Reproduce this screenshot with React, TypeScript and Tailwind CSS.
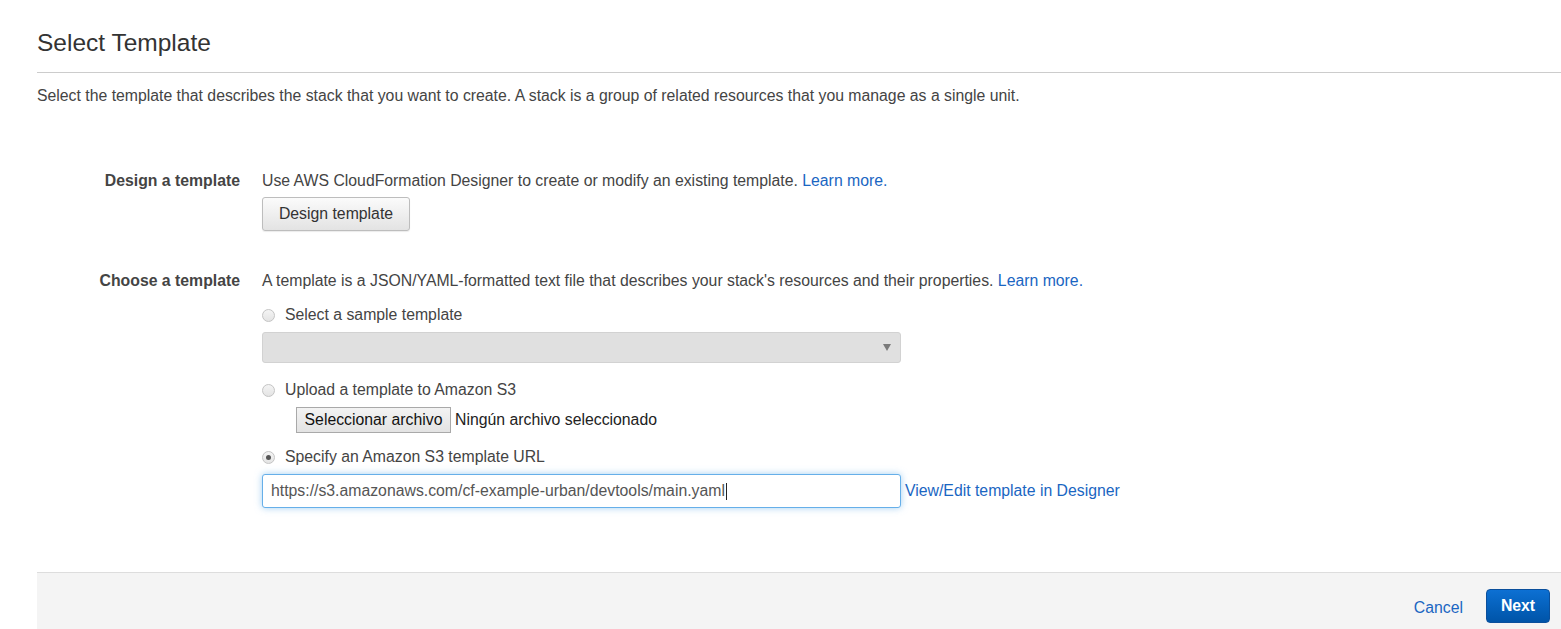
import React from "react";

const font = { fontFamily: '"Liberation Sans", Arial, Helvetica, sans-serif' };

function Radio({ checked }: { checked?: boolean }) {
  return (
    <span className="relative inline-flex h-[13px] w-[13px] items-center justify-center rounded-full border border-[#c4c4c4] bg-gradient-to-b from-[#f4f4f4] to-[#e4e4e4]">
      {checked && <span className="h-[5px] w-[5px] rounded-full bg-[#555]" />}
    </span>
  );
}

export default function App() {
  return (
    <div className="min-h-[629px] bg-white text-[15.8px] text-[#444]" style={font}>
      <div className="ml-[37px]">
        <h1 className="pt-[28px] text-[24.5px] leading-[30px] text-[#333]">Select Template</h1>
        <div className="mt-[14px] h-px bg-[#cccccc]" />
        <p className="mt-[13px] leading-[20px]">
          Select the template that describes the stack that you want to create. A stack is a group of related resources that you manage as a single unit.
        </p>

        <div className="mt-[65px] grid grid-cols-[203px_1fr] gap-x-[22px]">
          <div className="text-right font-bold leading-[20px] text-[#444]">Design a template</div>
          <div>
            <div className="leading-[20px]">
              Use AWS CloudFormation Designer to create or modify an existing template.{" "}
              <span className="text-[#1a66c2]">Learn more.</span>
            </div>
            <button className="mt-[6px] flex h-[34px] w-[148px] items-center justify-center rounded-[3px] border border-[#bdbdbd] bg-gradient-to-b from-[#fbfbfb] to-[#e3e3e3] text-[15.8px] text-[#333] shadow-[0_1px_1px_rgba(0,0,0,0.08)]">
              Design template
            </button>
          </div>
        </div>

        <div className="mt-[40px] grid grid-cols-[203px_1fr] gap-x-[22px]">
          <div className="text-right font-bold leading-[20px] text-[#444]">Choose a template</div>
          <div>
            <div className="leading-[20px]">
              A template is a JSON/YAML-formatted text file that describes your stack's resources and their properties.{" "}
              <span className="text-[#1a66c2]">Learn more.</span>
            </div>

            <div className="mt-[14px] flex h-[20px] items-center">
              <Radio />
              <span className="ml-[10px]">Select a sample template</span>
            </div>
            <div className="mt-[7px] flex h-[31px] w-[639px] items-center justify-end rounded-[3px] border border-[#d2d2d2] bg-[#e0e0e0] pr-[9px]">
              <span className="h-0 w-0 border-x-[4px] border-t-[7px] border-x-transparent border-t-[#7a7a7a]" />
            </div>

            <div className="mt-[17px] flex h-[20px] items-center">
              <Radio />
              <span className="ml-[10px]">Upload a template to Amazon S3</span>
            </div>
            <div className="ml-[34px] mt-[7px] flex h-[26px] items-center">
              <span className="flex h-[26px] w-[155px] items-center justify-center border border-[#a9a9a9] bg-gradient-to-b from-[#f3f3f3] to-[#e3e3e3] text-[15.8px] text-[#111]">
                Seleccionar archivo
              </span>
              <span className="ml-[4px] text-[#222]">Ningún archivo seleccionado</span>
            </div>

            <div className="mt-[14px] flex h-[20px] items-center">
              <Radio checked />
              <span className="ml-[10px]">Specify an Amazon S3 template URL</span>
            </div>
            <div className="mt-[7px] flex items-center">
              <div className="flex h-[34px] w-[639px] items-center rounded-[3px] border border-[#66afe9] bg-white pl-[8px] text-[#555] shadow-[0_0_7px_rgba(102,175,233,0.6)]">
                <span>https://s3.amazonaws.com/cf-example-urban/devtools/main.yaml</span>
                <span className="ml-px h-[17px] w-px bg-[#222]" />
              </div>
              <span className="ml-[4px] text-[#1a66c2]">View/Edit template in Designer</span>
            </div>
          </div>
        </div>

        <div className="mt-[64px] flex h-[80px] items-start justify-end border-t border-[#dddddd] bg-[#f4f4f4] pr-[11px] pt-[16px]">
          <span className="mt-[7px] text-[#1a66c2]">Cancel</span>
          <button className="ml-[23px] flex h-[34px] w-[64px] items-center justify-center rounded-[4px] border border-[#0a4f9c] bg-gradient-to-b from-[#0d70d3] to-[#0054a8] font-bold text-white">
            Next
          </button>
        </div>
      </div>
    </div>
  );
}
